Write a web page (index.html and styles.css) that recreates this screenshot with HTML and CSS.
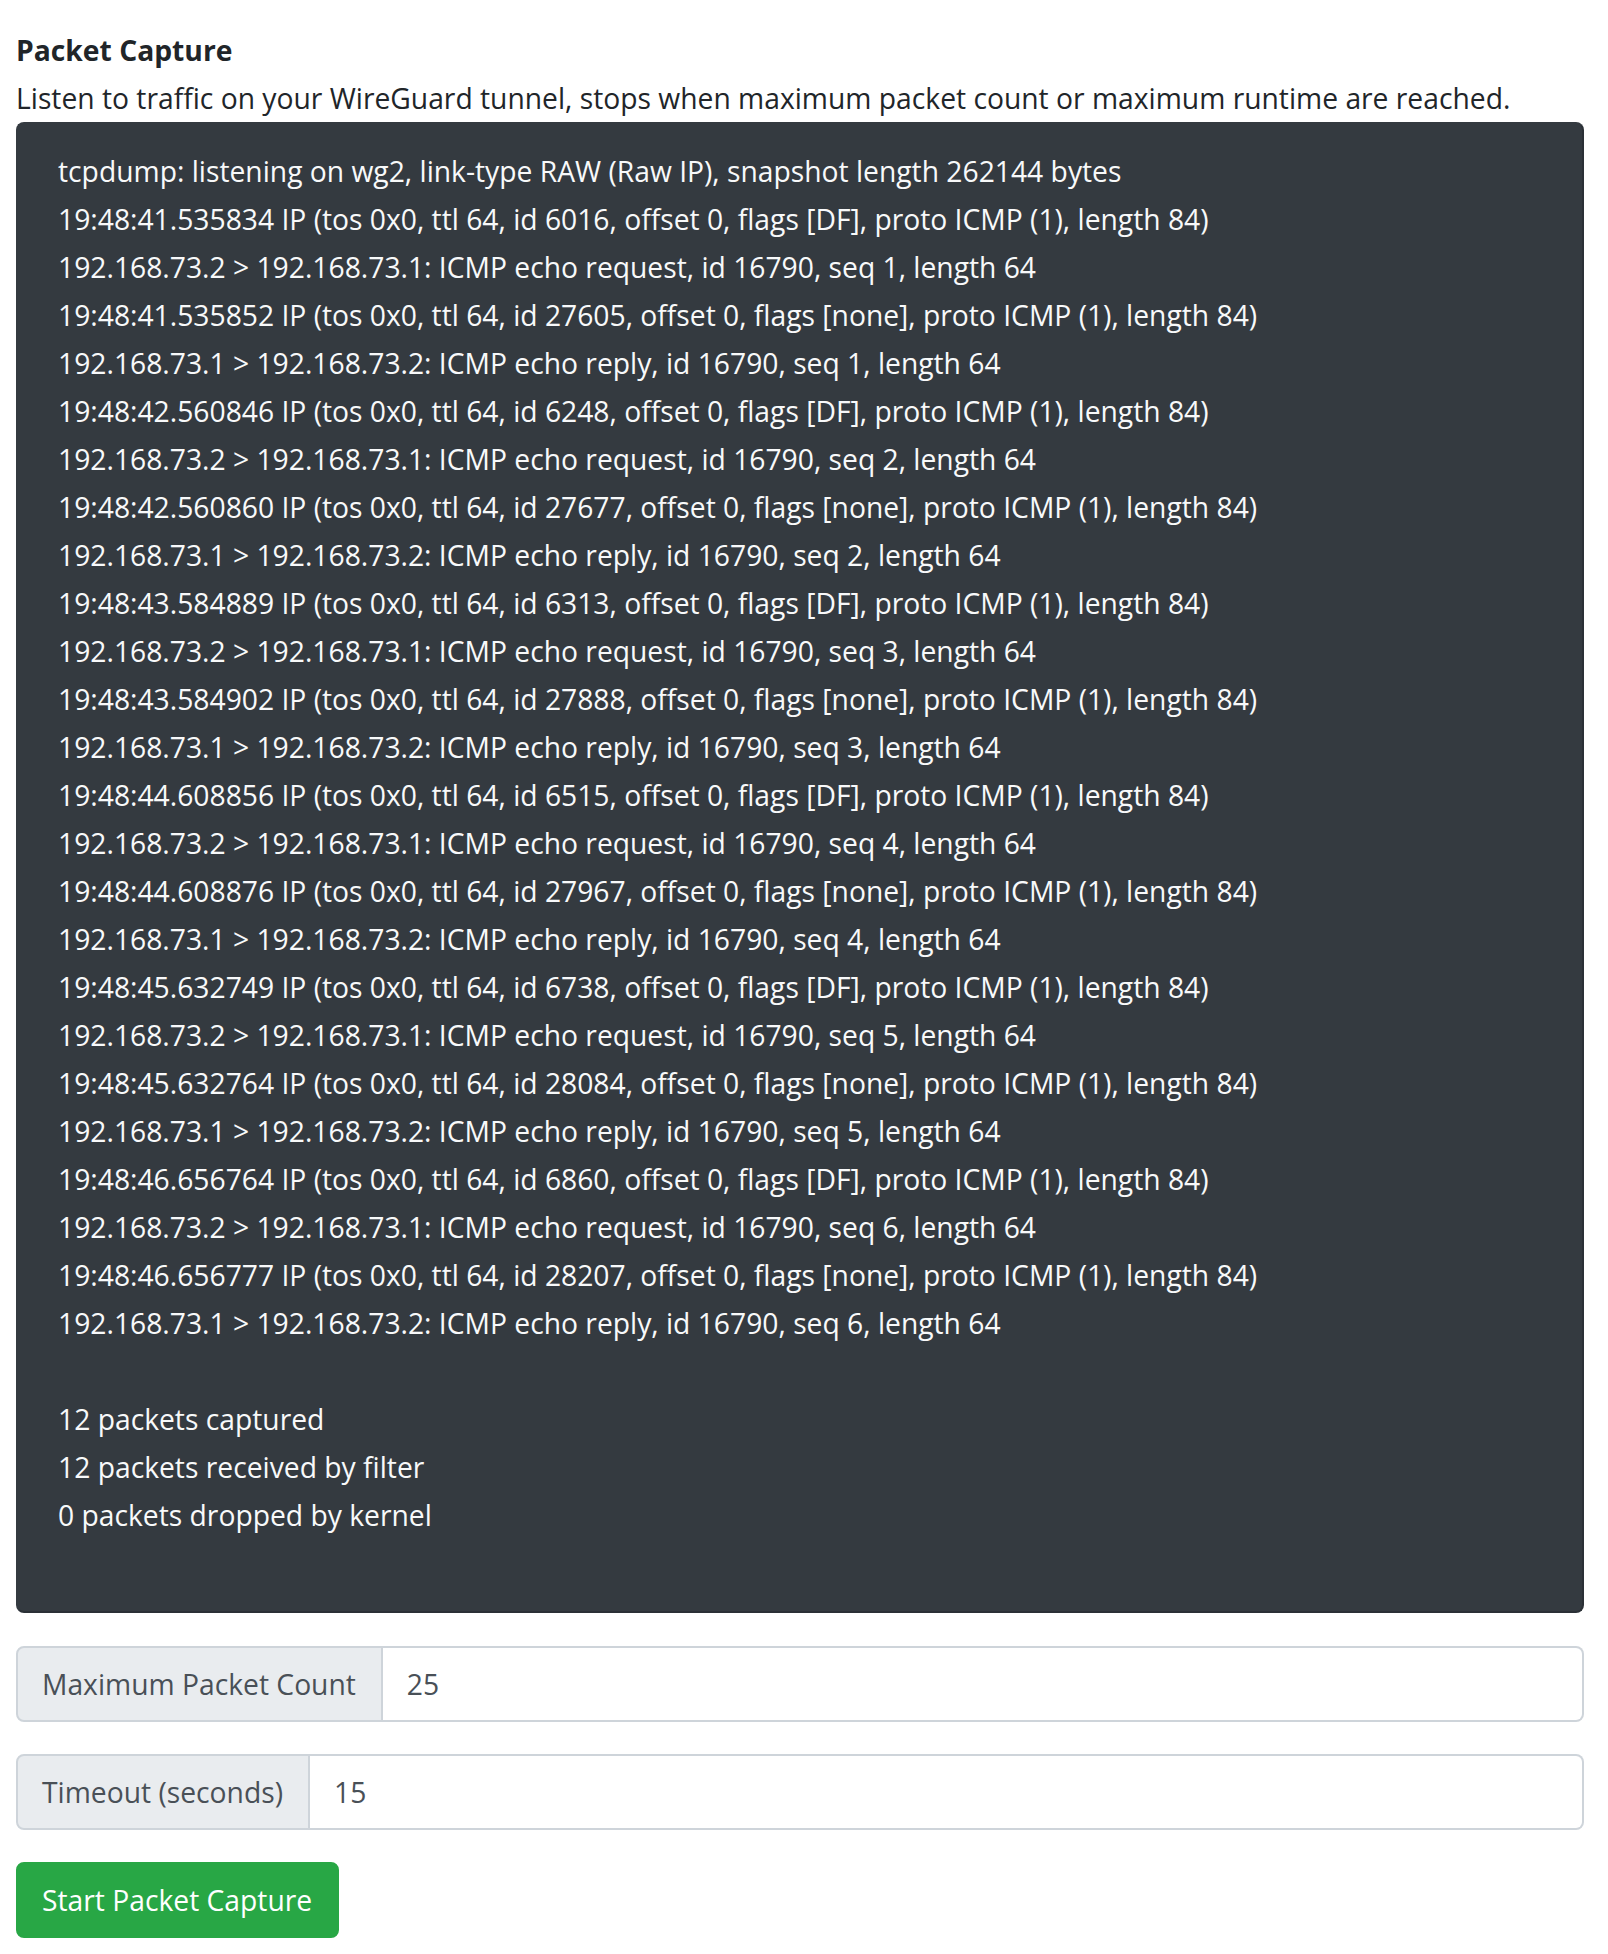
FILE: index.html
```html
<!DOCTYPE html>
<html lang="en">
<head>
    <meta charset="UTF-8">
    <meta name="viewport" content="width=device-width, initial-scale=1.0">
    <title>Packet Capture</title>
    <link rel="stylesheet" href="styles.css">
</head>
<body>
    <div class="page">
        <div class="title">Packet Capture</div>
        <div class="subtitle">Listen to traffic on your WireGuard tunnel, stops when maximum packet count or maximum runtime are reached.</div>

        <pre class="capture-log">tcpdump: listening on wg2, link-type RAW (Raw IP), snapshot length 262144 bytes
19:48:41.535834 IP (tos 0x0, ttl 64, id 6016, offset 0, flags [DF], proto ICMP (1), length 84)
192.168.73.2 &gt; 192.168.73.1: ICMP echo request, id 16790, seq 1, length 64
19:48:41.535852 IP (tos 0x0, ttl 64, id 27605, offset 0, flags [none], proto ICMP (1), length 84)
192.168.73.1 &gt; 192.168.73.2: ICMP echo reply, id 16790, seq 1, length 64
19:48:42.560846 IP (tos 0x0, ttl 64, id 6248, offset 0, flags [DF], proto ICMP (1), length 84)
192.168.73.2 &gt; 192.168.73.1: ICMP echo request, id 16790, seq 2, length 64
19:48:42.560860 IP (tos 0x0, ttl 64, id 27677, offset 0, flags [none], proto ICMP (1), length 84)
192.168.73.1 &gt; 192.168.73.2: ICMP echo reply, id 16790, seq 2, length 64
19:48:43.584889 IP (tos 0x0, ttl 64, id 6313, offset 0, flags [DF], proto ICMP (1), length 84)
192.168.73.2 &gt; 192.168.73.1: ICMP echo request, id 16790, seq 3, length 64
19:48:43.584902 IP (tos 0x0, ttl 64, id 27888, offset 0, flags [none], proto ICMP (1), length 84)
192.168.73.1 &gt; 192.168.73.2: ICMP echo reply, id 16790, seq 3, length 64
19:48:44.608856 IP (tos 0x0, ttl 64, id 6515, offset 0, flags [DF], proto ICMP (1), length 84)
192.168.73.2 &gt; 192.168.73.1: ICMP echo request, id 16790, seq 4, length 64
19:48:44.608876 IP (tos 0x0, ttl 64, id 27967, offset 0, flags [none], proto ICMP (1), length 84)
192.168.73.1 &gt; 192.168.73.2: ICMP echo reply, id 16790, seq 4, length 64
19:48:45.632749 IP (tos 0x0, ttl 64, id 6738, offset 0, flags [DF], proto ICMP (1), length 84)
192.168.73.2 &gt; 192.168.73.1: ICMP echo request, id 16790, seq 5, length 64
19:48:45.632764 IP (tos 0x0, ttl 64, id 28084, offset 0, flags [none], proto ICMP (1), length 84)
192.168.73.1 &gt; 192.168.73.2: ICMP echo reply, id 16790, seq 5, length 64
19:48:46.656764 IP (tos 0x0, ttl 64, id 6860, offset 0, flags [DF], proto ICMP (1), length 84)
192.168.73.2 &gt; 192.168.73.1: ICMP echo request, id 16790, seq 6, length 64
19:48:46.656777 IP (tos 0x0, ttl 64, id 28207, offset 0, flags [none], proto ICMP (1), length 84)
192.168.73.1 &gt; 192.168.73.2: ICMP echo reply, id 16790, seq 6, length 64

12 packets captured
12 packets received by filter
0 packets dropped by kernel</pre>

        <form class="capture-form">
            <div class="input-group">
                <span class="addon">Maximum Packet Count</span>
                <input type="text" class="field" value="25">
            </div>
            <div class="input-group">
                <span class="addon">Timeout (seconds)</span>
                <input type="text" class="field" value="15">
            </div>
            <div>
                <button type="button" class="btn-start">Start Packet Capture</button>
            </div>
        </form>
    </div>
</body>
</html>
```
FILE: styles.css
```css
body {
    margin: 0;
    font-family: "Open Sans", "Noto Sans", sans-serif;
    font-size: 28.25px;
    line-height: 48px;
    color: #212529;
    background: #fff;
}

.page {
    padding: 26px 24px 0 16px;
}

.title {
    font-weight: bold;
}

.capture-log {
    margin: 0;
    padding: 23px 40px 72px;
    background-color: #343a40;
    border: 2px solid #2b3036;
    border-top-color: #343a40;
    border-left-color: #343a40;
    border-radius: 8px;
    color: #f8f9fa;
    font-family: "Open Sans", "Noto Sans", sans-serif;
    font-size: 28.25px;
    line-height: 48px;
    white-space: pre-wrap;
}

.capture-form {
    display: flex;
    flex-direction: column;
    gap: 32px;
    margin-top: 33px;
}

.input-group {
    display: flex;
    height: 76px;
}

.addon {
    display: flex;
    align-items: center;
    padding: 0 25px 0 24px;
    background-color: #e9ecef;
    color: #495057;
    border: 2px solid #ced4da;
    border-radius: 8px 0 0 8px;
    white-space: nowrap;
}

.field {
    flex: 1;
    min-width: 0;
    margin: 0;
    padding: 0 24px;
    border: 2px solid #ced4da;
    border-left: none;
    border-radius: 0 8px 8px 0;
    font-family: inherit;
    font-size: 28.25px;
    color: #495057;
    background: #fff;
    outline: none;
}

.btn-start {
    height: 76px;
    padding: 0 25px 0 24px;
    background-color: #28a745;
    color: #fff;
    border: 2px solid #28a745;
    border-radius: 8px;
    font-family: inherit;
    font-size: 28.25px;
    cursor: pointer;
}

.btn-start:hover {
    background-color: #218838;
}
```
